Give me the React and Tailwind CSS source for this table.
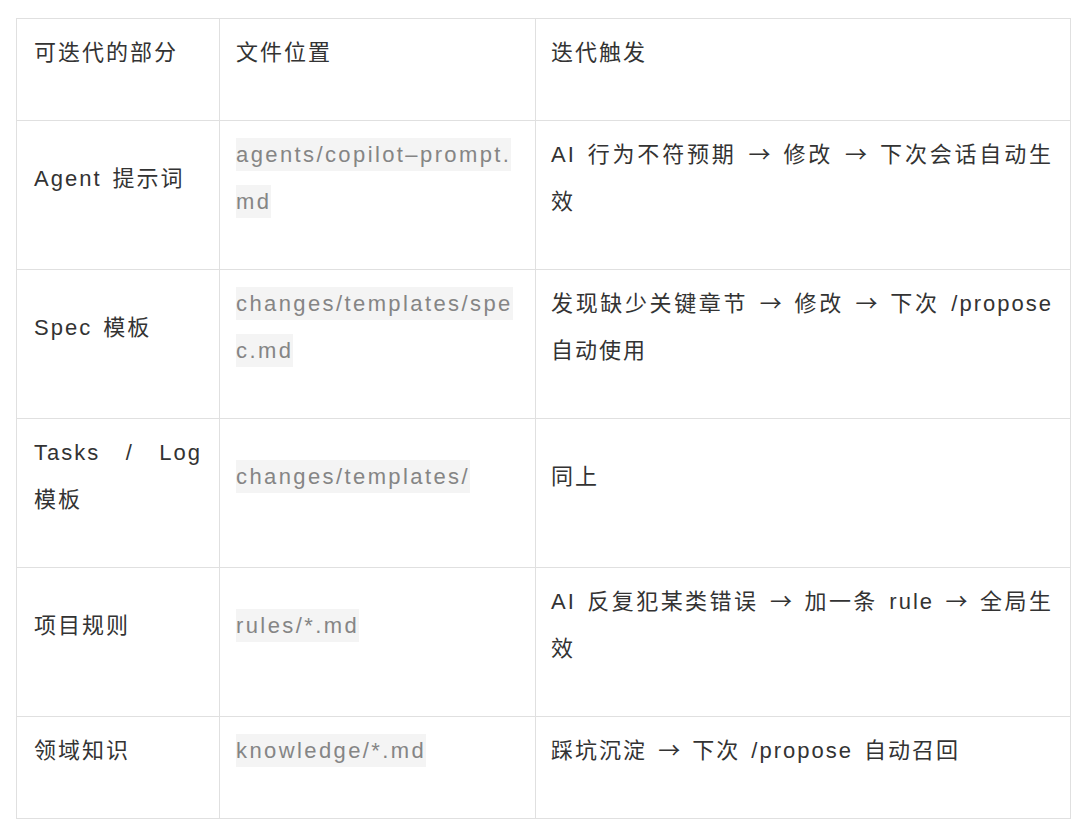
import React from "react";

const rows = [
  {
    a: ["可迭代的部分"],
    b: [{ t: "文件位置" }],
    c: ["迭代触发"],
  },
  {
    a: ["Agent 提示词"],
    b: [{ t: "agents/copilot–prompt.", code: true }, { t: "md", code: true }],
    c: ["AI 行为不符预期 → 修改 → 下次会话自动生", "效"],
  },
  {
    a: ["Spec 模板"],
    b: [{ t: "changes/templates/spe", code: true }, { t: "c.md", code: true }],
    c: ["发现缺少关键章节 → 修改 → 下次 /propose", "自动使用"],
  },
  {
    a: ["Tasks / Log", "模板"],
    b: [{ t: "changes/templates/", code: true }],
    c: ["同上"],
  },
  {
    a: ["项目规则"],
    b: [{ t: "rules/*.md", code: true }],
    c: ["AI 反复犯某类错误 → 加一条 rule → 全局生", "效"],
  },
  {
    a: ["领域知识"],
    b: [{ t: "knowledge/*.md", code: true }],
    c: ["踩坑沉淀 → 下次 /propose 自动召回"],
  },
];

function withArrows(s) {
  const parts = s.split("→");
  const out = [];
  parts.forEach((p, i) => {
    out.push(<React.Fragment key={"p" + i}>{p}</React.Fragment>);
    if (i < parts.length - 1)
      out.push(
        <span
          key={"a" + i}
          className="tracking-[1px] leading-[0px]"
          style={{ fontFamily: '"Noto Sans CJK SC", sans-serif' }}
        >
          →
        </span>
      );
  });
  return out;
}

function TextLines({ lines }) {
  return (
    <>
      {lines.map((l, i) => (
        <div
          key={i}
          className={
            i < lines.length - 1
              ? "h-[47px] text-justify [text-align-last:justify] whitespace-nowrap"
              : "h-[47px] whitespace-nowrap"
          }
        >
          {withArrows(l)}
        </div>
      ))}
    </>
  );
}

function CodeLines({ lines }) {
  return (
    <>
      {lines.map((l, i) =>
        l.code ? (
          <div key={i} className="h-[47px] whitespace-nowrap">
            <span className="bg-[#f4f4f4] text-[#858585] py-[4px] tracking-[2.4px] [word-spacing:0px]">
              {l.t}
            </span>
          </div>
        ) : (
          <div key={i} className="h-[47px] whitespace-nowrap">
            {l.t}
          </div>
        )
      )}
    </>
  );
}

export default function App() {
  return (
    <div className="min-h-[826px] w-[1080px] bg-white pt-[18px] pl-[16px]">
      <table
        className="border-collapse table-fixed w-[1054px] text-[22px] leading-[47px] tracking-[2px] [word-spacing:3px] text-[#333333]"
        style={{ fontFamily: '"Liberation Sans", "Noto Sans CJK SC", sans-serif' }}
        lang="zh-CN"
      >
        <colgroup>
          <col className="w-[203px]" />
          <col className="w-[316px]" />
          <col className="w-[535px]" />
        </colgroup>
        <tbody>
          {rows.map((r, i) => (
            <tr key={i}>
              <td className="border border-[#e0e0e0] align-middle pt-[10px] pb-[44px] pl-[17px] pr-[17px]">
                <TextLines lines={r.a} />
              </td>
              <td className="border border-[#e0e0e0] align-middle pt-[10px] pb-[44px] pl-[16px] pr-[16px]">
                <CodeLines lines={r.b} />
              </td>
              <td className="border border-[#e0e0e0] align-middle pt-[10px] pb-[44px] pl-[15px] pr-[17px]">
                <TextLines lines={r.c} />
              </td>
            </tr>
          ))}
        </tbody>
      </table>
    </div>
  );
}
